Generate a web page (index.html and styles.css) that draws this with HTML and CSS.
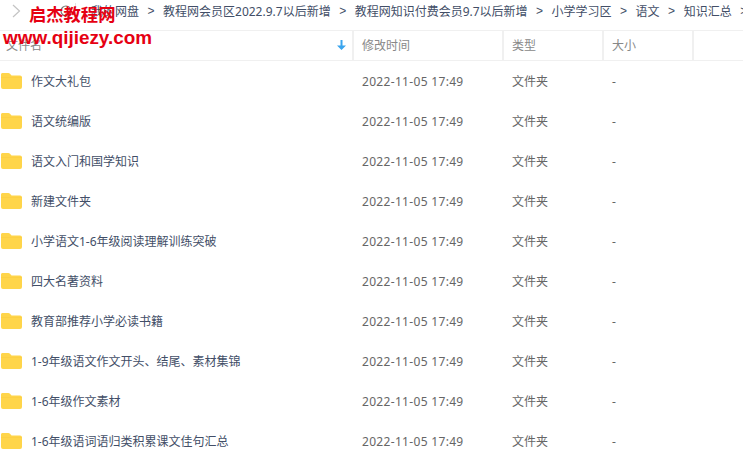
FILE: index.html
```html
<!DOCTYPE html>
<html lang="zh-CN">
<head>
<meta charset="utf-8">
<title>文件列表</title>
<link rel="stylesheet" href="styles.css">
</head>
<body>
<div class="page">
  <nav class="crumbs">
    <svg class="back" width="9" height="14" viewBox="0 0 9 14"><path d="M1 1l6.500 6L1 13" fill="none" stroke="#c4c4c4" stroke-width="1.200"/></svg>
    <svg class="search" width="14" height="14" viewBox="0 0 14 14"><circle cx="7" cy="7" r="5" fill="none" stroke="#777" stroke-width="1.200"/></svg>
    <span class="sep-bar"></span>
    <span class="crumb first">我的网盘</span><span class="gt">&gt;</span>
    <span class="crumb">教程网会员区2022.9.7以后新增</span><span class="gt">&gt;</span>
    <span class="crumb">教程网知识付费会员9.7以后新增</span><span class="gt">&gt;</span>
    <span class="crumb">小学学习区</span><span class="gt">&gt;</span>
    <span class="crumb">语文</span><span class="gt">&gt;</span>
    <span class="crumb">知识汇总</span><span class="gt">&gt;</span>
  </nav>
  <div class="head">
    <div class="hcell c-name">文件名<svg class="sort" width="9" height="10" viewBox="0 0 9 10"><path d="M3.500 0h2v5.500H9L4.500 10 0 5.500h3.500z" fill="#3aa5ee"/></svg></div>
    <div class="hcell c-time">修改时间</div>
    <div class="hcell c-type">类型</div>
    <div class="hcell c-size">大小</div>
  </div>
  <div class="rows">
    <div class="row"><div class="c-name n"><svg class="folder" width="21" height="16" viewBox="0 0 21 16"><use href="#f"/></svg>作文大礼包</div><div class="c-time t d">2022-11-05 17:49</div><div class="c-type t">文件夹</div><div class="c-size t">-</div></div>
    <div class="row"><div class="c-name n"><svg class="folder" width="21" height="16" viewBox="0 0 21 16"><use href="#f"/></svg>语文统编版</div><div class="c-time t d">2022-11-05 17:49</div><div class="c-type t">文件夹</div><div class="c-size t">-</div></div>
    <div class="row"><div class="c-name n"><svg class="folder" width="21" height="16" viewBox="0 0 21 16"><use href="#f"/></svg>语文入门和国学知识</div><div class="c-time t d">2022-11-05 17:49</div><div class="c-type t">文件夹</div><div class="c-size t">-</div></div>
    <div class="row"><div class="c-name n"><svg class="folder" width="21" height="16" viewBox="0 0 21 16"><use href="#f"/></svg>新建文件夹</div><div class="c-time t d">2022-11-05 17:49</div><div class="c-type t">文件夹</div><div class="c-size t">-</div></div>
    <div class="row"><div class="c-name n"><svg class="folder" width="21" height="16" viewBox="0 0 21 16"><use href="#f"/></svg>小学语文1-6年级阅读理解训练突破</div><div class="c-time t d">2022-11-05 17:49</div><div class="c-type t">文件夹</div><div class="c-size t">-</div></div>
    <div class="row"><div class="c-name n"><svg class="folder" width="21" height="16" viewBox="0 0 21 16"><use href="#f"/></svg>四大名著资料</div><div class="c-time t d">2022-11-05 17:49</div><div class="c-type t">文件夹</div><div class="c-size t">-</div></div>
    <div class="row"><div class="c-name n"><svg class="folder" width="21" height="16" viewBox="0 0 21 16"><use href="#f"/></svg>教育部推荐小学必读书籍</div><div class="c-time t d">2022-11-05 17:49</div><div class="c-type t">文件夹</div><div class="c-size t">-</div></div>
    <div class="row"><div class="c-name n"><svg class="folder" width="21" height="16" viewBox="0 0 21 16"><use href="#f"/></svg>1-9年级语文作文开头、结尾、素材集锦</div><div class="c-time t d">2022-11-05 17:49</div><div class="c-type t">文件夹</div><div class="c-size t">-</div></div>
    <div class="row"><div class="c-name n"><svg class="folder" width="21" height="16" viewBox="0 0 21 16"><use href="#f"/></svg>1-6年级作文素材</div><div class="c-time t d">2022-11-05 17:49</div><div class="c-type t">文件夹</div><div class="c-size t">-</div></div>
    <div class="row"><div class="c-name n"><svg class="folder" width="21" height="16" viewBox="0 0 21 16"><use href="#f"/></svg>1-6年级语词语归类积累课文佳句汇总</div><div class="c-time t d">2022-11-05 17:49</div><div class="c-type t">文件夹</div><div class="c-size t">-</div></div>
  </div>
  <div class="mark mark-cn">启杰教程网</div>
  <div class="mark mark-en">www.qijiezy.com</div>
  <svg class="defs" width="0" height="0"><defs><g id="f"><path d="M1.500 0h5.800c.7 0 1.200.3 1.700.8L10.500 2.400H19a2 2 0 0 1 2 2V14a2 2 0 0 1-2 2H2a2 2 0 0 1-2-2V1.500C0 .7.700 0 1.500 0z" fill="#ffd54a"/><path d="M0 4h21v.8H0z" fill="#f9c93c" opacity=".5"/></g></defs></svg>
</div>
</body>
</html>
```
FILE: styles.css
```css
* { box-sizing: border-box; }
html, body { margin: 0; padding: 0; background: #fff; }
body { font-family: "Noto Sans", "Noto Sans CJK SC", "Liberation Sans", sans-serif; font-size: 12px; }
.page { position: relative; width: 743px; height: 461px; overflow: hidden; }
.crumbs { display: flex; align-items: center; height: 30px; padding-left: 12px; padding-bottom: 9px; padding-top: 0; white-space: nowrap; color: #424e67; }
.crumbs > * { flex: none; }
.back { margin-right: 38px; }
.search { margin-right: 2px; }
.sep-bar { width: 1px; height: 16px; background: #e3e3e3; margin-right: 15px; }
.crumb { color: #424e67; }
.gt { width: 24px; text-align: center; color: #424e67; font-family: "Liberation Sans", sans-serif; }
.head { display: flex; height: 31px; border-top: 1px solid #f0f0f0; border-bottom: 1px solid #f0f0f0; }
.hcell { display: flex; align-items: center; padding-left: 8px; padding-bottom: 2px; color: #888; border-right: 2px solid #f0f0f0; }
.c-name { width: 354px; flex: none; }
.c-time { width: 150px; flex: none; }
.c-type { width: 100px; flex: none; }
.c-size { width: 90px; flex: none; }
.hcell.c-name { padding-left: 6px; position: relative; }
.sort { position: absolute; right: 6px; top: 9px; }
.rows { display: flex; flex-direction: column; }
.row { display: flex; align-items: center; height: 40px; }
.n { display: flex; align-items: center; color: #424e67; padding-left: 1px; }
.t { color: #666; padding-left: 8px; }
.d { letter-spacing: .32px; }
.folder { margin-right: 9px; }
.mark { position: absolute; color: #e60012; font-weight: 700; white-space: nowrap; }
.mark-cn { left: 29px; top: 1px; font-size: 17.300px; font-family: "Noto Sans CJK SC", sans-serif; }
.mark-en { left: 3px; top: 27px; font-size: 18.900px; font-family: "Liberation Sans", sans-serif; }
.defs { position: absolute; }
```
